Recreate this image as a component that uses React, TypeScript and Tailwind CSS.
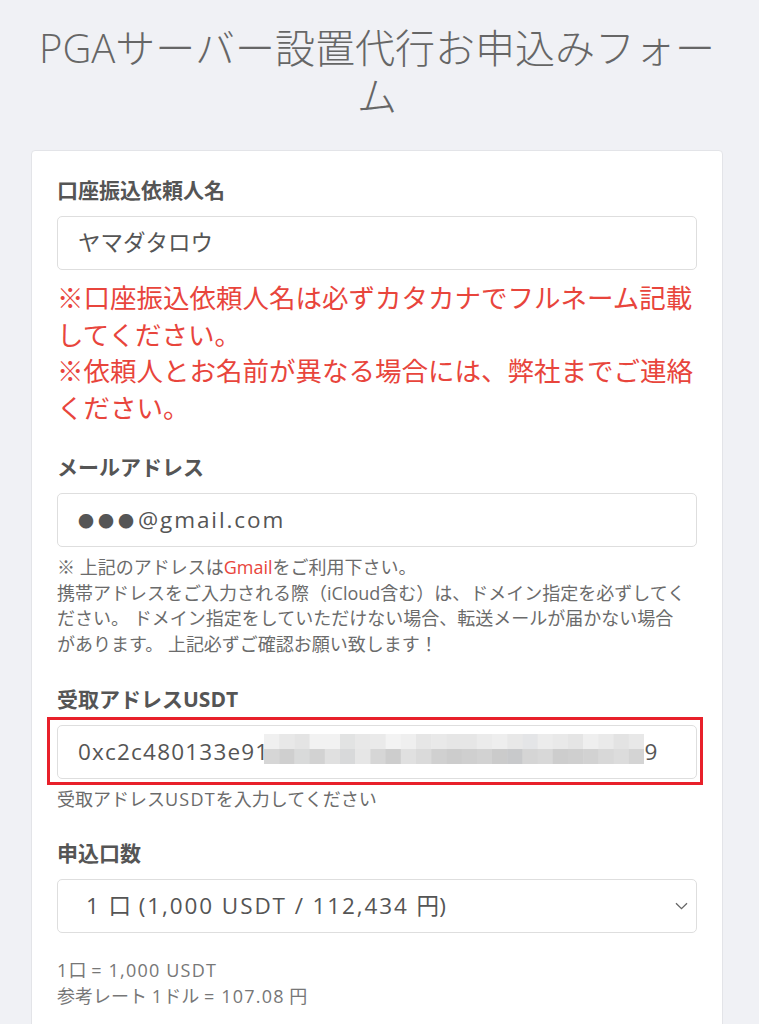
import React from "react";

const topRow = [
  "#f0f0f0", "#e8e8e8", "#e4e4e4", "#f2f2f2", "#f2f2f2", "#e2e3e3", "#e8e8e8", "#eaeaea", "#f3f3f3", "#efefef",
  "#e6e6e6", "#e9e9e9", "#e6e6e6", "#e6e6e6", "#ebebeb", "#eeeeee", "#e8e8e8", "#e4e5e7", "#ececec", "#e9e9e9",
  "#e5e5e5", "#efefef", "#eaeaea", "#e3e3e3", "#e8e8e8",
];
const bottomRow = [
  "#d6d6d6", "#cfcfcf", "#d9dada", "#d2d2d2", "#e0e0e0", "#d8d9da", "#e6e6e6", "#d6d6d6", "#cdcdcd", "#e0e0e0",
  "#dadada", "#d0d0d0", "#cccccc", "#cfcfcf", "#d2d2d2", "#cbcbcb", "#c8c9cb", "#d5d5d5", "#d8d8d8", "#cdcdcd",
  "#cfcfcf", "#d2d2d2", "#d8d8d8", "#dcdcdc", "#d4d4d4",
];

function Mosaic() {
  const w = 380 / 25;
  return (
    <svg width="380" height="30" viewBox="0 0 380 30" className="block shrink-0">
      {topRow.map((c, i) => (
        <rect key={"t" + i} x={i * w} y={0} width={w + 0.5} height={15} fill={c} />
      ))}
      {bottomRow.map((c, i) => (
        <rect key={"b" + i} x={i * w} y={15} width={w + 0.5} height={15} fill={c} />
      ))}
    </svg>
  );
}

function Label({ children }: { children: React.ReactNode }) {
  return (
    <div className="text-[21px] leading-[30px] font-bold text-[#555555] mb-[11px]">{children}</div>
  );
}

function Box({ children, className = "" }: { children: React.ReactNode; className?: string }) {
  return (
    <div
      className={
        "h-[54px] rounded-[5px] border border-[#dedede] bg-white flex items-center text-[22.5px] text-[#555555] " +
        className
      }
    >
      {children}
    </div>
  );
}

function L({ children }: { children: React.ReactNode }) {
  return <span className="tracking-[1.2px]">{children}</span>;
}

function W({ children }: { children: React.ReactNode }) {
  return <span className="tracking-[1.9px]">{children}</span>;
}

export default function App() {
  return (
    <div className="min-h-screen bg-[#f0f1f5] [font-family:'Open_Sans','Noto_Sans_CJK_JP',sans-serif] pb-10">
      <div className="pl-[31px] w-[723px]">
        <h1 className="pt-[24px] text-center text-[40px] leading-[48px] font-light text-[#666666]">
          PGAサーバー設置代行お申込みフォーム
        </h1>
        <div className="mt-[30px] bg-white border border-[#e3e4e8] rounded-[4px] px-[25px] pt-[24px] pb-[80px]">
          {/* name */}
          <Label>口座振込依頼人名</Label>
          <Box className="pl-[20px]">ヤマダタロウ</Box>
          <div className="mt-[10px] text-[26.5px] leading-[36.5px] text-[#e8453c] mb-[26px]">
            <p>※口座振込依頼人名は必ずカタカナでフルネーム記載してください。</p>
            <p>※依頼人とお名前が異なる場合には、弊社までご連絡ください。</p>
          </div>

          {/* email */}
          <Label>メールアドレス</Label>
          <Box className="pl-[20px]">
            <span className="text-[16px] tracking-[4px] [font-family:'Noto_Sans_CJK_JP',sans-serif]">●●●</span>
            <W>@gmail.com</W>
          </Box>
          <div className="mt-[8px] text-[18px] leading-[25.5px] text-[#6b6b6b] mb-[27px]">
            <div className="whitespace-nowrap">
              ※ 上記のアドレスは<span className="text-[#e8453c]">Gmail</span>をご利用下さい。
            </div>
            <div className="whitespace-nowrap">携帯アドレスをご入力される際（iCloud含む）は、ドメイン指定を必ずしてく</div>
            <div className="whitespace-nowrap">ださい。 ドメイン指定をしていただけない場合、転送メールが届かない場合</div>
            <div className="whitespace-nowrap">があります。 上記必ずご確認お願い致します！</div>
          </div>

          {/* usdt */}
          <Label>受取アドレスUSDT</Label>
          <div className="relative">
            <div className="absolute -left-[10px] -right-[6px] -top-[8px] -bottom-[6px] border-[3px] border-[#e8202a] pointer-events-none" />
            <Box className="pl-[20px]">
              <L>0xc2c480133e91</L>
              <span className="-ml-[5px] -mt-[7px]">
                <Mosaic />
              </span>
              <span>9</span>
            </Box>
          </div>
          <div className="mt-[8px] text-[18px] leading-[25px] text-[#6b6b6b] mb-[26px]">
            受取アドレス<L>USDT</L>を入力してください
          </div>

          {/* count */}
          <Label>申込口数</Label>
          <Box className="pl-[28px] pr-[8px] justify-between">
            <span className="whitespace-pre">
              <W>{"1 "}</W>口<W>{" (1,000 USDT / 112,434 "}</W>円<W>{")"}</W>
            </span>
            <svg width="13" height="8" viewBox="0 0 13 8">
              <path d="M1 1.2 L6.5 6.7 L12 1.2" fill="none" stroke="#666666" strokeWidth="1.3" />
            </svg>
          </Box>
          <div className="mt-[24px] text-[18px] leading-[26px] text-[#777777]">
            <div>
              <L>1</L>口 <L>= 1,000 USDT</L>
            </div>
            <div>
              参考レート <L>1</L>ドル <L>= 107.08</L> 円
            </div>
          </div>
        </div>
      </div>
    </div>
  );
}
